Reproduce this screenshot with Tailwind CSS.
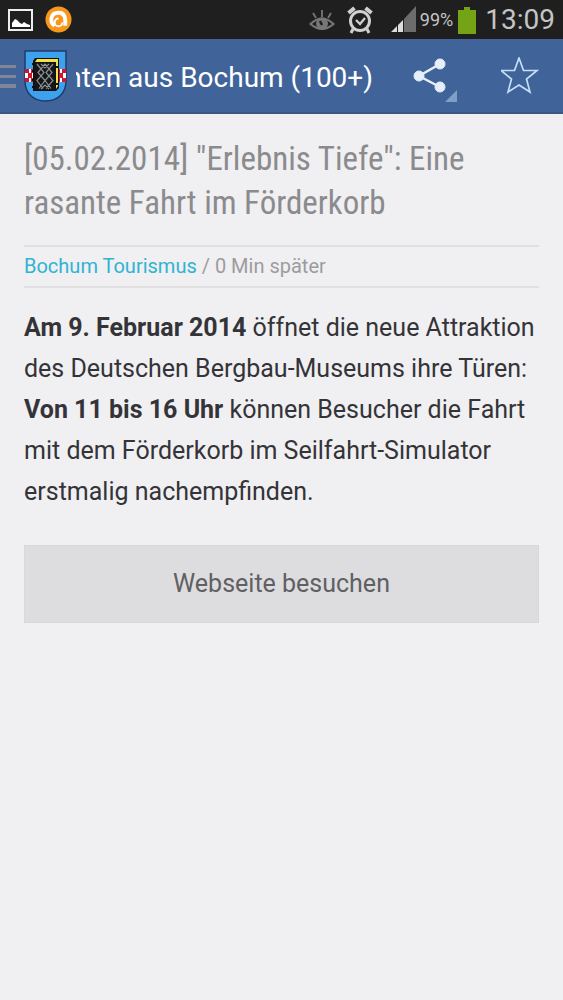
<!DOCTYPE html>
<html lang="de">
<head>
    <meta charset="UTF-8">
    <meta name="viewport" content="width=device-width, initial-scale=1.0">
    <title>Nachrichten aus Bochum</title>
    <script src="https://cdn.jsdelivr.net/npm/@tailwindcss/browser@4"></script>
</head>
<body class="min-h-screen bg-[#f0eff2] font-[Roboto,sans-serif]">
    <!-- Status bar -->
    <div class="flex h-[39px] items-center bg-[#201f1f] px-2 text-[#c4c4c4]">
        <svg class="h-6 w-[26px]" viewBox="0 0 26 24" fill="none">
            <rect x="1" y="2" width="23" height="20" stroke="#eeeef2" stroke-width="2"/>
            <path d="M4 19v-4l3-4 2 1 3 3 2 1 2-2 3 2 3 1v2z" fill="#fff"/>
        </svg>
        <svg class="ml-[11px] h-[27px] w-[27px]" viewBox="0 0 28 28">
            <circle cx="14" cy="14" r="13.500" fill="#f7981d"/>
            <path d="M10 20.500C4 16 6 7 14 7c5 0 7 3.500 7 8v5.500" fill="none" stroke="#fff" stroke-width="4"/>
            <path d="M19 15a4 4 0 1 1-4-4" fill="none" stroke="#fff" stroke-width="2" transform="translate(-1 2)"/>
        </svg>
        <div class="ml-auto flex items-center">
            <svg class="h-7 w-7" viewBox="0 0 28 28" fill="none" stroke="#777" stroke-width="2">
                <path d="M2.500 18q11.500-11 23 0q-11.500 10-23 0z"/>
                <circle cx="14" cy="17.500" r="5" fill="#777"/>
                <path d="M12 15l2 4" stroke="#201f1f" stroke-width="2.500"/>
                <path d="M14 11V4M8 12 5 7M20 12l3-5" stroke-width="1.800"/>
            </svg>
            <svg class="ml-2.5 h-7 w-7" viewBox="0 0 28 28" fill="none" stroke="#cfcfcf" stroke-width="3">
                <circle cx="14" cy="15" r="9.500"/>
                <path d="m10 14 4 4 5-6" stroke-width="2.300"/>
                <path d="m2.500 7 6-5M25.500 7l-6-5" stroke-width="4"/>
                <path d="M7 23l-2 4M21 23l2 4"/>
            </svg>
            <svg class="ml-4 h-[27px] w-[26px]" viewBox="0 0 26 27">
                <path d="M1 26l6-6v6zM8 19l5-5v12H8z" fill="#ddd"/>
                <path d="M14 13 26 0v26H14z" fill="#6c6c6c"/>
            </svg>
            <span class="ml-1 text-[18px]">99%</span>
            <svg class="ml-1 h-7 w-5" viewBox="0 0 20 28" fill="#74a416">
                <path d="M1 4h6V1h6v3h6v24H1z"/>
            </svg>
            <span class="ml-2 text-[28px]">13:09</span>
        </div>
    </div>

    <!-- Action bar -->
    <header class="flex h-[75px] items-center border-b-2 border-[#3b5680] bg-[#40639a] text-white">
        <button class="flex shrink-0 items-center gap-2" aria-label="Menü">
            <svg class="h-6 w-4" viewBox="0 0 16 24" fill="#808696">
                <path d="M0 1h16v3H0zM0 11h16v3H0zM0 20h16v4H0z"/>
            </svg>
            <svg class="h-[52px] w-[43px]" viewBox="0 0 43 52">
                <path d="M1 1h41v30c0 12-8 20-20.500 20S1 43 1 31z" fill="#3ea1ee" stroke="#1e3c68" stroke-width="1.500"/>
                <path d="M1 19h10v13H1zM33 19h9v13h-9z" fill="#fff"/>
                <path d="M1 19h4v4H1zM7 19h4v4H7zM4 23h4v5H4zM1 28h4v4H1zM7 28h4v4H7zM33 19h3v4h-3zM38 19h4v4h-4zM35 23h4v5h-4zM33 28h3v4h-3zM38 28h4v4h-4z" fill="#cb1730"/>
                <path d="M9 11l2-3h24v30l-3 3H9z" fill="#111"/>
                <path d="m11 12 2-3h21v27l-2 3V12z" fill="#f2e34c"/>
                <path d="M10 13h21v27H10z" fill="#161616"/>
                <path d="M13 14l7 8.500-7 8 6 8M21 14l-7 8.500 7 8-6 8M21 14l7 8.500-7 8 6 8M29 14l-7 8.500 7 8-7 8M17 14l4 4 4-4M17 39l4-4 4 4" fill="none" stroke="#8a8f93" stroke-width="1.200"/>
                <path d="M31 17h4M31 34h4M8 14h3M8 21h3M8 30h3M8 37h3" stroke="#111" stroke-width="2"/>
            </svg>
        </button>
        <!-- long titles are cut at the left edge -->
        <h1 class="ml-[9px] flex min-w-0 flex-1 justify-end overflow-hidden whitespace-nowrap pt-1 text-[28px]">Nachrichten aus Bochum (100+)</h1>
        <button class="relative ml-9 flex h-full w-[52px] shrink-0 items-center" aria-label="Teilen">
            <svg class="ml-1 h-9 w-9" viewBox="0 0 36 36" fill="#e6eefa" stroke="#e6eefa">
                <path d="M27 6 6 18l21 11" fill="none" stroke-width="2.500"/>
                <circle cx="6" cy="18" r="5"/>
                <circle cx="27" cy="6" r="5"/>
                <circle cx="27" cy="29" r="5"/>
            </svg>
            <svg class="absolute bottom-2.5 right-1 h-3 w-3" viewBox="0 0 12 12">
                <path d="M12 0v12H0z" fill="#7f9fc4"/>
            </svg>
        </button>
        <button class="ml-10 mr-6 shrink-0" aria-label="Favorit">
            <svg class="h-[38px] w-[38px]" viewBox="0 0 38 38" fill="none" stroke="#c5dff7" stroke-width="1.700">
                <path d="m18 1 4.500 12.500H36L25.500 22 29 35l-11-7-11 7 3.500-13L0 13.500h13.500z"/>
            </svg>
        </button>
    </header>

    <!-- Article -->
    <main class="px-6 pt-[23px]">
        <h2 class="font-['Roboto_Condensed',Roboto,sans-serif] text-[33px] leading-[44px] text-[#8b8b8d]">[05.02.2014] "Erlebnis Tiefe": Eine rasante Fahrt im Förderkorb</h2>
        <p class="mt-5 border-y-2 border-[#e0e0e3] text-[20px] leading-[39px] text-[#9c9c9f]"><a href="#" class="text-[#2fb4d2]">Bochum Tourismus</a> / 0 Min später</p>
        <p class="mt-[19px] text-[25px] leading-[41px] text-[#343438]"><b>Am 9. Februar 2014</b> öffnet die neue Attraktion des Deutschen Bergbau-Museums ihre Türen: <b>Von 11 bis 16 Uhr</b> können Besucher die Fahrt mit dem Förderkorb im Seilfahrt-Simulator erstmalig nachempfinden.</p>
        <button class="mt-[33px] h-[78px] w-full border border-[#d8d7da] bg-[#dddcdf] text-[25px] text-[#606063]">Webseite besuchen</button>
    </main>
</body>
</html>
